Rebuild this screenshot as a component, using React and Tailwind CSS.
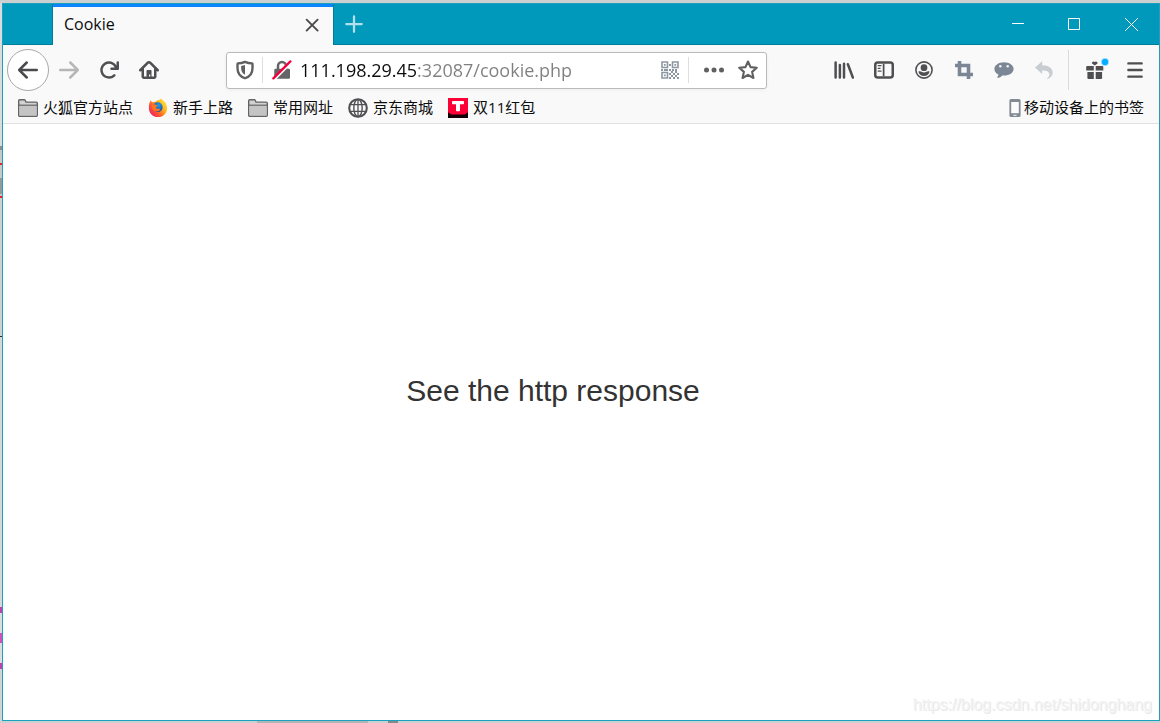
import React, { useState } from "react";

const UI = "font-['Open_Sans','Noto_Sans_CJK_SC',sans-serif]";

function Svg({ children, className = "size-5", box = "0 0 16 16" }) {
  return (
    <svg viewBox={box} className={className + " shrink-0"} fill="currentColor" aria-hidden="true">
      {children}
    </svg>
  );
}

function BackIcon() {
  return (
    <Svg>
      <path d="M15 7H3.414l4.293-4.293a1 1 0 0 0-1.414-1.414l-6 6a1 1 0 0 0 0 1.414l6 6a1 1 0 0 0 1.414-1.414L3.414 9H15a1 1 0 0 0 0-2z" />
    </Svg>
  );
}

function ForwardIcon() {
  return (
    <Svg>
      <path d="M15.707 7.293l-6-6a1 1 0 0 0-1.414 1.414L12.586 7H1a1 1 0 0 0 0 2h11.586l-4.293 4.293a1 1 0 1 0 1.414 1.414l6-6a1 1 0 0 0 0-1.414z" />
    </Svg>
  );
}

function ReloadIcon() {
  return (
    <Svg>
      <path d="M15 1a1 1 0 0 0-1 1v2.418A6.995 6.995 0 1 0 8 15a6.954 6.954 0 0 0 4.95-2.05 1 1 0 0 0-1.414-1.414A5.019 5.019 0 1 1 12.549 6H10a1 1 0 0 0 0 2h5a1 1 0 0 0 1-1V2a1 1 0 0 0-1-1z" />
    </Svg>
  );
}

function HomeIcon() {
  return (
    <Svg>
      <path
        d="M1 8.2l5.9-5.9a1.55 1.55 0 0 1 2.2 0L15 8.2M3 7v6.2a.9.9 0 0 0 .9.9h8.200a.9.9 0 0 0 .9-.9V7"
        fill="none"
        stroke="currentColor"
        strokeWidth="2"
        strokeLinecap="round"
        strokeLinejoin="round"
      />
      <path d="M6.600 8h2.800a.6.6 0 0 1 .6.6V14H9V11.500H8V14H6V8.600a.6.6 0 0 1 .6-.6z" />
    </Svg>
  );
}

function ShieldIcon() {
  return (
    <Svg>
      <path
        d="M8 1.500c-1.900.9-3.900 1.200-5.700 1.200-.2 0-.3.200-.3.400v3.400c0 3.800 2.300 6.800 6 8.100 3.700-1.300 6-4.300 6-8.100V3.100c0-.2-.1-.4-.3-.4-1.800 0-3.800-.3-5.700-1.200z"
        fill="none"
        stroke="currentColor"
        strokeWidth="1.900"
        strokeLinejoin="round"
      />
      <path d="M8 4c-1 .4-2 .6-3.100.7V6.500c0 2.400 1.200 4.200 3.100 5.200z" />
    </Svg>
  );
}

function InsecureIcon() {
  return (
    <Svg>
      <path d="M4.800 8V4.800a3.200 3.200 0 0 1 6.400 0V8" fill="none" stroke="currentColor" strokeWidth="2" />
      <rect x="1.800" y="7" width="12.600" height="8" rx="1" />
      <path d="M1.600 15.400L15.200 1.800" stroke="#fff" strokeWidth="2.600" />
      <path d="M1.100 14.700L14.700 1.100" stroke="#f5003d" strokeWidth="1.800" strokeLinecap="round" />
    </Svg>
  );
}

const QR_CELLS = [
  [8, 3], [8, 8], [3, 8], [0, 8], [5, 8], [14, 8], [11, 8],
  [8, 12], [10, 10], [14, 10], [12, 12], [16, 12], [10, 14], [14, 14], [8, 16], [12, 16], [16, 16],
];

function QrIcon() {
  return (
    <Svg box="0 0 18 18" className="size-[18px]">
      <path
        d="M1 1h5.500v5.500H1zM11.500 1H17v5.500h-5.500zM1 11.500h5.500V17H1z"
        fill="none"
        stroke="currentColor"
        strokeWidth="1.600"
      />
      <path d="M2.900 2.900h1.800v1.800H2.900zM13.400 2.900h1.800v1.800h-1.800zM2.900 13.400h1.800v1.800H2.900z" />
      {QR_CELLS.map(([x, y]) => (
        <rect key={x + "-" + y} x={x} y={y} width="2" height="2" />
      ))}
    </Svg>
  );
}

function DotsIcon() {
  return (
    <Svg>
      <circle cx="2" cy="8" r="2" />
      <circle cx="8" cy="8" r="2" />
      <circle cx="14" cy="8" r="2" />
    </Svg>
  );
}

function StarIcon() {
  return (
    <Svg>
      <path
        d="M8 1.200l2.050 4.500 4.950.5-3.700 3.300 1.050 4.900L8 11.900l-4.350 2.500 1.050-4.900L1 6.200l4.950-.5z"
        fill="none"
        stroke="currentColor"
        strokeWidth="1.700"
        strokeLinejoin="round"
      />
    </Svg>
  );
}

function LibraryIcon() {
  return (
    <Svg>
      <path
        d="M1.300 2v12M4.700 4v10M8 3v11M11.100 3.400l4 10.600"
        fill="none"
        stroke="currentColor"
        strokeWidth="2"
        strokeLinecap="round"
      />
    </Svg>
  );
}

function SidebarIcon() {
  return (
    <Svg>
      <rect x="1" y="2" width="14" height="12" rx="2" fill="none" stroke="currentColor" strokeWidth="2" />
      <path d="M7 3h1.400v10H7z" />
      <path d="M3 4.500h3M3 6.700h2.200M3 8.900h3" stroke="currentColor" strokeWidth="1" />
    </Svg>
  );
}

function AccountIcon() {
  return (
    <Svg className="size-[18px]">
      <circle cx="8" cy="8" r="7.200" fill="none" stroke="currentColor" strokeWidth="1.400" />
      <circle cx="8" cy="5.900" r="3" />
      <path d="M3 9.400c1-.5 2.100-.5 2.800.1 1.300.9 3.100.9 4.400 0 .7-.6 1.800-.6 2.800-.1-.3 2.200-2.400 4-5 4s-4.700-1.800-5-4z" />
    </Svg>
  );
}

function CropIcon() {
  return (
    <Svg box="0 0 18 18" className="size-[18px]">
      <path d="M4.500 0v13.500H18M0 4.500h13.500V18" fill="none" stroke="currentColor" strokeWidth="3.600" />
    </Svg>
  );
}

function ChatIcon() {
  return (
    <Svg box="0 0 20 18">
      <path d="M10 1.300c5.300 0 9.600 2.900 9.600 6.600s-4.300 6.600-9.600 6.600c-.6 0-1.200 0-1.700-.1-1.300 1.600-3 2.300-4.700 2.300-.5 0-.5-.4-.2-.7.7-.7 1-1.500.9-2.500C2 12.300.4 10.200.4 7.900.4 4.200 4.700 1.300 10 1.300z" />
      <circle cx="6.300" cy="5.300" r="1.200" fill="#f4f6f8" />
      <circle cx="13.700" cy="5.300" r="1.200" fill="#f4f6f8" />
    </Svg>
  );
}

function UndoIcon() {
  return (
    <Svg box="0 0 18 18" className="size-[18px]">
      <path d="M0 6.500L7.200.3v3.900c6.600 0 10.500 3 10.500 7.500 0 3-2.200 5.300-5 6-.8.200-.9-.4-.3-.8 1.300-.9 2-2 2-3.500 0-2.500-2.300-4-7.200-4v3.500z" />
    </Svg>
  );
}

function GiftIcon() {
  return (
    <Svg box="0 0 24 20" className="h-5 w-6 overflow-visible">
      <path d="M4.200 6h6.600v4.500H3.200V7a1 1 0 0 1 1-1zM12.700 6h6.600a1 1 0 0 1 1 1v3.500h-7.600zM4.400 12h6.400v7H5.400a1 1 0 0 1-1-1zM12.700 12h6.400v6a1 1 0 0 1-1 1h-5.400z" />
      <path d="M11.750 5.500L9 3.500a1.600 1.600 0 0 1 2.750-1.500A1.600 1.600 0 0 1 14.500 3.500z" />
      <circle cx="22" cy="2" r="3.700" fill="#00adff" stroke="#d8f2ff" strokeWidth=".6" />
    </Svg>
  );
}

function MenuIcon() {
  return (
    <Svg>
      <path d="M2.700 2.700h10.600M2.700 8h10.600M2.700 13.300h10.600" stroke="currentColor" strokeWidth="1.900" strokeLinecap="round" />
    </Svg>
  );
}

function FolderIcon() {
  return (
    <Svg box="0 0 20 20">
      <path
        d="M.7 17.200V2.800c0-.6.400-1 1-1h4.600c.5 0 .8.300 1 .7l.7 1.600h10.300c.6 0 1 .4 1 1v12.100c0 .6-.4 1-1 1H1.700a1 1 0 0 1-1-1z"
        fill="#d2d2d3"
        stroke="#646465"
        strokeWidth="1.400"
      />
      <path d="M1 7.200h18" stroke="#646465" strokeWidth="1.200" />
      <path d="M1.400 8h17.200v9.600H1.400z" fill="#c4c4c5" />
    </Svg>
  );
}

function FirefoxIcon() {
  return (
    <svg viewBox="0 0 20 20" className="size-5 shrink-0" aria-hidden="true">
      <defs>
        <linearGradient id="fox" x1="1" y1=".1" x2=".1" y2=".9">
          <stop offset="0" stopColor="#fff14a" />
          <stop offset=".4" stopColor="#ffb01c" />
          <stop offset=".68" stopColor="#ff5a2a" />
          <stop offset="1" stopColor="#ee1f6e" />
        </linearGradient>
        <radialGradient id="globe" cx=".6" cy=".3" r=".8">
          <stop offset="0" stopColor="#1c9fe6" />
          <stop offset="1" stopColor="#26358f" />
        </radialGradient>
      </defs>
      <path
        d="M1.800 4.200c.2-.9.600-1.500 1.200-2 .1 1 .6 1.700 1.400 2 1-.4 2-.4 2.900-.1 1.200-1.700 2.600-2.400 4.200-2.400.4-.6 1.200-1.100 2.100-1.300.5 1.800 2.300 2.300 3.300 3.600 1.300 1.500 2.200 3.600 2.200 6.200 0 5-4 8.900-9.100 8.900S.9 15.200.9 10.200c0-2.300.1-4.600.9-6z"
        fill="url(#fox)"
      />
      <circle cx="9.700" cy="9.200" r="4.900" fill="url(#globe)" />
      <path
        d="M3.600 7.200c1-1 2.200-1.200 3.600-.8.700.2 1.300.7 2.600.8-.1 1-1 1.200-1.800 1.800-.2.900.3 1.600 1.400 1.800 1.200.2 2-.5 3 .2-.6 1.600-2.300 2.800-4.600 2.400-2.600-.5-4.300-3.400-4.200-6.200z"
        fill="#ff7423"
      />
    </svg>
  );
}

function GlobeIcon() {
  return (
    <Svg box="0 0 20 20">
      <g fill="none" stroke="#505053">
        <circle cx="10" cy="10" r="8.800" strokeWidth="2.100" />
        <ellipse cx="10" cy="10" rx="4.200" ry="8.600" strokeWidth="1.400" />
        <path d="M10 1.200v17.600M2.300 6.700h15.400M2.300 13.300h15.400" strokeWidth="1.300" />
      </g>
    </Svg>
  );
}

function TmallIcon() {
  return (
    <svg viewBox="0 0 20 20" className="size-5 shrink-0" aria-hidden="true">
      <path d="M0 0h20v20H0z" fill="#ff0036" />
      <path d="M0 20v-5.500c1.500 0 2 2 4 2h12c2 0 2.500-2 4-2V20z" fill="#120005" />
      <path d="M4.800 3h10.400c.5 0 .8.300.8.800v1.700c0 .4-.3.700-.8.700H12v6.300c0 .5-.4.800-.8.800H8.800c-.5 0-.8-.3-.8-.8V6.200H4.800c-.5 0-.8-.3-.8-.7V3.800c0-.5.300-.8.800-.8z" fill="#fff" />
    </svg>
  );
}

function PhoneIcon() {
  return (
    <svg viewBox="0 0 12 18" className="h-[18px] w-3 shrink-0" aria-hidden="true">
      <rect x=".4" width="11.200" height="18" rx="1.600" fill="#838b95" />
      <path d="M2.200 3h7.600v11.200H2.200z" fill="#fcfcfd" />
      <path d="M4.500 15.800h3V17h-3z" fill="#e5e7ea" />
    </svg>
  );
}

function ToolButton({ label, className = "text-[#4f4f51]", children }) {
  return (
    <button type="button" aria-label={label} className={"flex h-10 w-10 shrink-0 items-center justify-center " + className}>
      {children}
    </button>
  );
}

function Bookmark({ icon, children }) {
  return (
    <a href="#" className="flex items-center gap-[5px] whitespace-nowrap">
      {icon}
      <span className="pb-0.5">{children}</span>
    </a>
  );
}

function TitleBar() {
  return (
    <header className="flex h-[41px] bg-[#0099bc]">
      <div className="w-[50px] shrink-0 border-r border-b border-[#007d9b]" />
      <div className="flex w-[280px] shrink-0 items-center justify-between border-t-[3px] border-[#0a84ff] bg-[#f9f9fa] px-[11px] pb-0.5 text-base text-[#0c0c0d]">
        <h1 className="pb-0.5">Cookie</h1>
        <button type="button" aria-label="Close tab" className="text-[#4a4a4c]">
          <Svg>
            <path
              d="M3.700 3.700l8.800 8.800M12.500 3.700l-8.800 8.800"
              stroke="currentColor"
              strokeWidth="1.500"
              strokeLinecap="round"
            />
          </Svg>
        </button>
      </div>
      <div className="flex flex-1 items-center justify-between border-b border-l border-[#007d9b]">
        <button type="button" aria-label="New tab" className="flex h-full w-10 items-center justify-center text-[#b3e0eb]">
          <Svg>
            <path d="M8 1.800v12.400M1.800 8h12.400" stroke="currentColor" strokeWidth="1.800" strokeLinecap="round" />
          </Svg>
        </button>
        <div className="flex h-full text-white">
          <button type="button" aria-label="Minimize" className="flex w-14 items-center justify-center">
            <svg viewBox="0 0 13 13" className="size-[13px]" fill="none" stroke="currentColor" aria-hidden="true">
              <path d="M0 5.500h12" />
            </svg>
          </button>
          <button type="button" aria-label="Maximize" className="flex w-[57px] items-center justify-center">
            <svg viewBox="0 0 13 13" className="size-[13px]" fill="none" stroke="currentColor" aria-hidden="true">
              <path d="M.5.5h11v11H.5z" />
            </svg>
          </button>
          <button type="button" aria-label="Close" className="flex w-14 items-center justify-center">
            <svg viewBox="0 0 13 13" className="size-[13px]" fill="none" stroke="currentColor" aria-hidden="true">
              <path d="M0 0l13 13M13 0L0 13" />
            </svg>
          </button>
        </div>
      </div>
    </header>
  );
}

function NavBar() {
  const [url, setUrl] = useState("111.198.29.45:32087/cookie.php");
  return (
    <nav className="flex h-[50px] items-center bg-[#f9f9fa] px-1">
      <button
        type="button"
        aria-label="Back"
        className="flex size-[42px] shrink-0 items-center justify-center rounded-full border border-[#a9a9aa] bg-white text-[#4a4a4c]"
      >
        <BackIcon />
      </button>
      <ToolButton label="Forward" className="text-[#b6b6b7]"><ForwardIcon /></ToolButton>
      <ToolButton label="Reload"><ReloadIcon /></ToolButton>
      <ToolButton label="Home"><HomeIcon /></ToolButton>

      <div className="mx-[57px] flex h-[37px] min-w-0 flex-1 items-center rounded-[3px] border border-[#bababb] bg-white text-[#606062] shadow-[0_1px_4px_rgba(0,0,0,0.05)]">
        <button type="button" aria-label="Tracking protection" className="flex h-[26px] w-9 shrink-0 items-center justify-center border-r border-[#dededf]">
          <ShieldIcon />
        </button>
        <button type="button" aria-label="Connection not secure" className="flex w-[37px] shrink-0 items-center justify-center text-[#656567]">
          <InsecureIcon />
        </button>
        <input
          type="text"
          aria-label="Address"
          spellCheck={false}
          value={url}
          onChange={(e) => setUrl(e.target.value)}
          className="min-w-0 flex-1 bg-[linear-gradient(90deg,#0c0c0d_118px,#7f7f80_118px)] bg-clip-text text-lg text-transparent caret-black outline-none"
        />
        <button type="button" aria-label="QR code" className="flex h-[26px] w-[38px] shrink-0 items-center justify-center border-r border-[#dededf] text-[#8d97a1]">
          <QrIcon />
        </button>
        <button type="button" aria-label="Page actions" className="flex w-[49px] shrink-0 items-center justify-center">
          <DotsIcon />
        </button>
        <button type="button" aria-label="Bookmark this page" className="mr-2 flex shrink-0 items-center justify-center">
          <StarIcon />
        </button>
      </div>

      <ToolButton label="Library"><LibraryIcon /></ToolButton>
      <ToolButton label="Sidebars"><SidebarIcon /></ToolButton>
      <ToolButton label="Account"><AccountIcon /></ToolButton>
      <ToolButton label="Screenshot" className="text-[#7b8794]"><CropIcon /></ToolButton>
      <ToolButton label="Messages" className="text-[#7b8794]"><ChatIcon /></ToolButton>
      <ToolButton label="Undo close tab" className="text-[#c8cdd2]"><UndoIcon /></ToolButton>
      <div className="mr-1.5 ml-1 h-10 w-px bg-[#dcdcdd]" />
      <ToolButton label="What's new"><GiftIcon /></ToolButton>
      <ToolButton label="Menu"><MenuIcon /></ToolButton>
    </nav>
  );
}

function BookmarksBar() {
  return (
    <div className="flex h-[29px] items-center justify-between border-b border-[#e1e1e2] bg-[#f9f9fa] px-[15px] pb-0.5 text-[15px] text-[#0c0c0d]">
      <div className="flex gap-[15px]">
        <Bookmark icon={<FolderIcon />}>火狐官方站点</Bookmark>
        <Bookmark icon={<FirefoxIcon />}>新手上路</Bookmark>
        <Bookmark icon={<FolderIcon />}>常用网址</Bookmark>
        <Bookmark icon={<GlobeIcon />}>京东商城</Bookmark>
        <Bookmark icon={<TmallIcon />}>双11红包</Bookmark>
      </div>
      <a href="#" className="flex items-center gap-[3px] whitespace-nowrap">
        <PhoneIcon />
        <span className="pb-0.5">移动设备上的书签</span>
      </a>
    </div>
  );
}

function DesktopEdge() {
  return (
    <div className="flex w-0.5 shrink-0 flex-col bg-[#d2d4d4]">
      <div className="h-[143px] bg-[#dadcdc]" />
      <div className="h-1 bg-[#8d9092]" />
      <div className="h-[13px] bg-[#c6c8c9]" />
      <div className="h-0.5 bg-[#e3262e]" />
      <div className="h-[13px] bg-[#c6c8c9]" />
      <div className="h-4 bg-[#96999b]" />
      <div className="h-0.5 bg-[#c6c8c9]" />
      <div className="h-0.5 bg-[#e3262e]" />
      <div className="h-[138px] bg-[#cfd1d1]" />
      <div className="h-px bg-[#2b2b2b]" />
      <div className="h-[270px] bg-[#d6d7d7]" />
      <div className="h-1.5 bg-[#c040b0]" />
      <div className="h-5 bg-[#dcdddd]" />
      <div className="h-2.5 bg-[#d050bd]" />
      <div className="h-5 bg-[#dcdddd]" />
      <div className="h-1.5 bg-[#c040b0]" />
    </div>
  );
}

export default function App() {
  return (
    <div className={"flex min-h-screen flex-col bg-[#cdd0d0] pt-[3px] " + UI}>
      <div className="flex flex-1">
        <DesktopEdge />
        <div className="flex min-w-0 flex-1 flex-col border border-[#1ba1bf] bg-white">
          <TitleBar />
          <NavBar />
          <BookmarksBar />
          <main className="flex flex-1 flex-col justify-between">
            <h2 className="pt-[249px] pr-14 text-center font-['Liberation_Sans',Arial,sans-serif] text-[30px] leading-9 text-[#333]">
              See the http response
            </h2>
            <p className="pr-[7px] pb-[5px] text-right font-['Liberation_Sans',Arial,sans-serif] text-base leading-5 text-[#f3f3f3] [text-shadow:1px_1px_0_#e8e8e8]">
              https://blog.csdn.net/shidonghang
            </p>
          </main>
        </div>
      </div>
      <div className="flex h-0.5">
        <div className="w-[257px]" />
        <div className="w-[111px] bg-[#b4b6b6]" />
        <div className="w-5" />
        <div className="w-2.5 bg-[#858a8b]" />
      </div>
    </div>
  );
}
